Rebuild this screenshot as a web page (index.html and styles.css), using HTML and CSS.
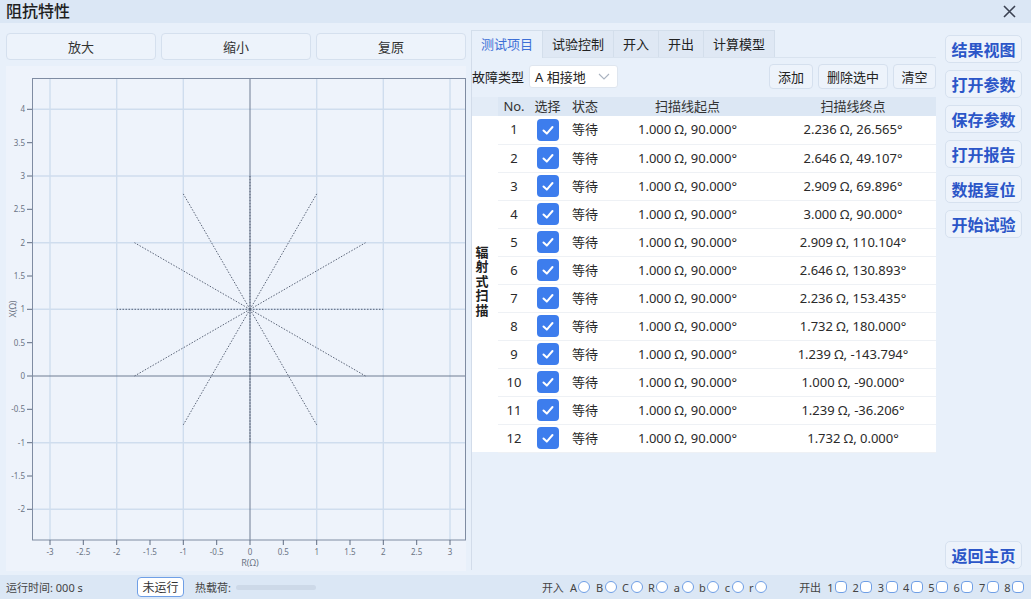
FILE: index.html
```html
<!DOCTYPE html>
<html lang="zh">
<head>
<meta charset="utf-8">
<title>阻抗特性</title>
<link rel="stylesheet" href="styles.css">
</head>
<body>
<div class="app">
  <header class="titlebar">
    <span class="title">阻抗特性</span>
    <svg class="close" viewBox="0 0 13 13" width="13" height="13"><path d="M1 1 L12 12 M12 1 L1 12"/></svg>
  </header>

  <main class="main">
    <section class="left">
      <div class="zoom-btns">
        <button class="btn">放大</button>
        <button class="btn">缩小</button>
        <button class="btn">复原</button>
      </div>
      <div class="chart">
        <svg class="plot" width="460" height="505" viewBox="0 0 460 505">
          <g class="gridlines">
            <line x1="44" y1="12" x2="44" y2="474"/>
            <line x1="110.7" y1="12" x2="110.7" y2="474"/>
            <line x1="177.3" y1="12" x2="177.3" y2="474"/>
            <line x1="310.7" y1="12" x2="310.7" y2="474"/>
            <line x1="377.3" y1="12" x2="377.3" y2="474"/>
            <line x1="444" y1="12" x2="444" y2="474"/>
            <line x1="26" y1="43.3" x2="460" y2="43.3"/>
            <line x1="26" y1="110" x2="460" y2="110"/>
            <line x1="26" y1="176.7" x2="460" y2="176.7"/>
            <line x1="26" y1="243.3" x2="460" y2="243.3"/>
            <line x1="26" y1="376.7" x2="460" y2="376.7"/>
            <line x1="26" y1="443.3" x2="460" y2="443.3"/>
          </g>
          <g class="zero">
            <line x1="244" y1="12" x2="244" y2="474"/>
            <line x1="26" y1="310" x2="460" y2="310"/>
          </g>
          <g class="rays">
            <line x1="244" y1="243.3" x2="377.3" y2="243.3"/>
            <line x1="244" y1="243.3" x2="359.5" y2="176.7"/>
            <line x1="244" y1="243.3" x2="310.7" y2="127.9"/>
            <line x1="244" y1="243.3" x2="244" y2="110"/>
            <line x1="244" y1="243.3" x2="177.3" y2="127.9"/>
            <line x1="244" y1="243.3" x2="128.5" y2="176.7"/>
            <line x1="244" y1="243.3" x2="110.7" y2="243.3"/>
            <line x1="244" y1="243.3" x2="128.5" y2="310"/>
            <line x1="244" y1="243.3" x2="177.3" y2="358.8"/>
            <line x1="244" y1="243.3" x2="244" y2="376.7"/>
            <line x1="244" y1="243.3" x2="310.7" y2="358.8"/>
            <line x1="244" y1="243.3" x2="359.5" y2="310"/>
          </g>
          <rect class="frame" x="26.5" y="12.5" width="433" height="461.5"/>
          <g class="ticks">
            <line x1="21" y1="43.3" x2="26" y2="43.3"/>
            <line x1="21" y1="76.7" x2="26" y2="76.7"/>
            <line x1="21" y1="110" x2="26" y2="110"/>
            <line x1="21" y1="143.3" x2="26" y2="143.3"/>
            <line x1="21" y1="176.7" x2="26" y2="176.7"/>
            <line x1="21" y1="210" x2="26" y2="210"/>
            <line x1="21" y1="243.3" x2="26" y2="243.3"/>
            <line x1="21" y1="276.7" x2="26" y2="276.7"/>
            <line x1="21" y1="310" x2="26" y2="310"/>
            <line x1="21" y1="343.3" x2="26" y2="343.3"/>
            <line x1="21" y1="376.7" x2="26" y2="376.7"/>
            <line x1="21" y1="410" x2="26" y2="410"/>
            <line x1="21" y1="443.3" x2="26" y2="443.3"/>
            <line x1="44" y1="474" x2="44" y2="479"/>
            <line x1="77.3" y1="474" x2="77.3" y2="479"/>
            <line x1="110.7" y1="474" x2="110.7" y2="479"/>
            <line x1="144" y1="474" x2="144" y2="479"/>
            <line x1="177.3" y1="474" x2="177.3" y2="479"/>
            <line x1="210.7" y1="474" x2="210.7" y2="479"/>
            <line x1="244" y1="474" x2="244" y2="479"/>
            <line x1="277.3" y1="474" x2="277.3" y2="479"/>
            <line x1="310.7" y1="474" x2="310.7" y2="479"/>
            <line x1="344" y1="474" x2="344" y2="479"/>
            <line x1="377.3" y1="474" x2="377.3" y2="479"/>
            <line x1="410.7" y1="474" x2="410.7" y2="479"/>
            <line x1="444" y1="474" x2="444" y2="479"/>
          </g>
          <g class="ylabels">
            <text x="19" y="46">4</text>
            <text x="19" y="79.5">3.5</text>
            <text x="19" y="113">3</text>
            <text x="19" y="146">2.5</text>
            <text x="19" y="179.5">2</text>
            <text x="19" y="213">1.5</text>
            <text x="19" y="246">1</text>
            <text x="19" y="279.5">0.5</text>
            <text x="19" y="313">0</text>
            <text x="19" y="346">-0.5</text>
            <text x="19" y="379.5">-1</text>
            <text x="19" y="413">-1.5</text>
            <text x="19" y="446">-2</text>
          </g>
          <g class="xlabels">
            <text x="44" y="489">-3</text>
            <text x="77.3" y="489">-2.5</text>
            <text x="110.7" y="489">-2</text>
            <text x="144" y="489">-1.5</text>
            <text x="177.3" y="489">-1</text>
            <text x="210.7" y="489">-0.5</text>
            <text x="244" y="489">0</text>
            <text x="277.3" y="489">0.5</text>
            <text x="310.7" y="489">1</text>
            <text x="344" y="489">1.5</text>
            <text x="377.3" y="489">2</text>
            <text x="410.7" y="489">2.5</text>
            <text x="444" y="489">3</text>
          </g>
          <text class="axis-title" x="244" y="500">R(Ω)</text>
          <text class="axis-title" transform="translate(10 243) rotate(-90)" x="0" y="0">X(Ω)</text>
        </svg>
      </div>
    </section>

    <section class="center">
      <nav class="tabs">
        <span class="tab active">测试项目</span>
        <span class="tab">试验控制</span>
        <span class="tab">开入</span>
        <span class="tab">开出</span>
        <span class="tab">计算模型</span>
      </nav>
      <div class="tab-body">
        <div class="toolbar">
          <span class="label">故障类型</span>
          <div class="select">
            <span>A 相接地</span>
            <svg class="chev" viewBox="0 0 12 7" width="12" height="7"><polyline points="1,1 6,6 11,1"/></svg>
          </div>
          <div class="tool-btns">
            <button class="tbtn w44">添加</button>
            <button class="tbtn w70">删除选中</button>
            <button class="tbtn w43">清空</button>
          </div>
        </div>
        <table class="grid">
          <colgroup>
            <col class="c-group"><col class="c-no"><col class="c-sel"><col class="c-st"><col class="c-a"><col class="c-b">
          </colgroup>
          <thead>
            <tr><th class="th-group"></th><th>No.</th><th>选择</th><th>状态</th><th>扫描线起点</th><th>扫描线终点</th></tr>
          </thead>
          <tbody>
            <tr><td class="group" rowspan="12"><span class="vtext">辐射式扫描</span></td><td>1</td><td><span class="cb"><svg viewBox="0 0 22 22"><path d="M6.5 11.5 L9.8 14.6 L15.5 8"/></svg></span></td><td>等待</td><td>1.000 Ω, 90.000°</td><td>2.236 Ω, 26.565°</td></tr>
            <tr><td>2</td><td><span class="cb"><svg viewBox="0 0 22 22"><path d="M6.5 11.5 L9.8 14.6 L15.5 8"/></svg></span></td><td>等待</td><td>1.000 Ω, 90.000°</td><td>2.646 Ω, 49.107°</td></tr>
            <tr><td>3</td><td><span class="cb"><svg viewBox="0 0 22 22"><path d="M6.5 11.5 L9.8 14.6 L15.5 8"/></svg></span></td><td>等待</td><td>1.000 Ω, 90.000°</td><td>2.909 Ω, 69.896°</td></tr>
            <tr><td>4</td><td><span class="cb"><svg viewBox="0 0 22 22"><path d="M6.5 11.5 L9.8 14.6 L15.5 8"/></svg></span></td><td>等待</td><td>1.000 Ω, 90.000°</td><td>3.000 Ω, 90.000°</td></tr>
            <tr><td>5</td><td><span class="cb"><svg viewBox="0 0 22 22"><path d="M6.5 11.5 L9.8 14.6 L15.5 8"/></svg></span></td><td>等待</td><td>1.000 Ω, 90.000°</td><td>2.909 Ω, 110.104°</td></tr>
            <tr><td>6</td><td><span class="cb"><svg viewBox="0 0 22 22"><path d="M6.5 11.5 L9.8 14.6 L15.5 8"/></svg></span></td><td>等待</td><td>1.000 Ω, 90.000°</td><td>2.646 Ω, 130.893°</td></tr>
            <tr><td>7</td><td><span class="cb"><svg viewBox="0 0 22 22"><path d="M6.5 11.5 L9.8 14.6 L15.5 8"/></svg></span></td><td>等待</td><td>1.000 Ω, 90.000°</td><td>2.236 Ω, 153.435°</td></tr>
            <tr><td>8</td><td><span class="cb"><svg viewBox="0 0 22 22"><path d="M6.5 11.5 L9.8 14.6 L15.5 8"/></svg></span></td><td>等待</td><td>1.000 Ω, 90.000°</td><td>1.732 Ω, 180.000°</td></tr>
            <tr><td>9</td><td><span class="cb"><svg viewBox="0 0 22 22"><path d="M6.5 11.5 L9.8 14.6 L15.5 8"/></svg></span></td><td>等待</td><td>1.000 Ω, 90.000°</td><td>1.239 Ω, -143.794°</td></tr>
            <tr><td>10</td><td><span class="cb"><svg viewBox="0 0 22 22"><path d="M6.5 11.5 L9.8 14.6 L15.5 8"/></svg></span></td><td>等待</td><td>1.000 Ω, 90.000°</td><td>1.000 Ω, -90.000°</td></tr>
            <tr><td>11</td><td><span class="cb"><svg viewBox="0 0 22 22"><path d="M6.5 11.5 L9.8 14.6 L15.5 8"/></svg></span></td><td>等待</td><td>1.000 Ω, 90.000°</td><td>1.239 Ω, -36.206°</td></tr>
            <tr><td>12</td><td><span class="cb"><svg viewBox="0 0 22 22"><path d="M6.5 11.5 L9.8 14.6 L15.5 8"/></svg></span></td><td>等待</td><td>1.000 Ω, 90.000°</td><td>1.732 Ω, 0.000°</td></tr>
          </tbody>
        </table>
      </div>
    </section>

    <aside class="side">
      <button class="sbtn">结果视图</button>
      <button class="sbtn">打开参数</button>
      <button class="sbtn">保存参数</button>
      <button class="sbtn">打开报告</button>
      <button class="sbtn">数据复位</button>
      <button class="sbtn">开始试验</button>
      <button class="sbtn home">返回主页</button>
    </aside>
  </main>

  <footer class="status">
    <span class="runtime">运行时间: 000 s</span>
    <span class="state">未运行</span>
    <span class="heat">热载荷:</span>
    <span class="heatbar"></span>
    <div class="io io-in">
      <span class="io-title">开入</span>
      <span class="io-item">A<i class="led"></i></span>
      <span class="io-item">B<i class="led"></i></span>
      <span class="io-item">C<i class="led"></i></span>
      <span class="io-item">R<i class="led"></i></span>
      <span class="io-item">a<i class="led"></i></span>
      <span class="io-item">b<i class="led"></i></span>
      <span class="io-item">c<i class="led"></i></span>
      <span class="io-item">r<i class="led"></i></span>
    </div>
    <div class="io io-out">
      <span class="io-title">开出</span>
      <span class="io-item">1<i class="led sq"></i></span>
      <span class="io-item">2<i class="led sq"></i></span>
      <span class="io-item">3<i class="led sq"></i></span>
      <span class="io-item">4<i class="led sq"></i></span>
      <span class="io-item">5<i class="led sq"></i></span>
      <span class="io-item">6<i class="led sq"></i></span>
      <span class="io-item">7<i class="led sq"></i></span>
      <span class="io-item">8<i class="led sq"></i></span>
    </div>
  </footer>
</div>
</body>
</html>
```

FILE: styles.css
```css
* { box-sizing: border-box; margin: 0; padding: 0; }
html, body { width: 1031px; height: 599px; overflow: hidden; }
body {
  font-family: "Noto Sans", "Noto Sans CJK SC", sans-serif;
  color: #333;
  background: #e8f0fa;
}
button { font-family: inherit; cursor: pointer; }

.app { display: flex; flex-direction: column; height: 599px; }

/* title bar */
.titlebar {
  height: 23px;
  background: #dbe7f5;
  display: flex;
  align-items: center;
  justify-content: space-between;
  padding: 0 15px 0 6px;
}
.title { font-size: 16px; font-weight: 500; color: #1f1f1f; line-height: 23px; }
.close path { stroke: #3b4252; stroke-width: 1.6; fill: none; }

/* main */
.main {
  height: 552px;
  display: flex;
  padding: 0 9px 0 6px;
  background: #e8f0fa;
}

.left { width: 460px; padding-top: 10px; display: flex; flex-direction: column; }
.zoom-btns { display: flex; gap: 5px; height: 27px; }
.btn {
  flex: 1;
  background: #edf3fb;
  border: 1px solid #d5e0ee;
  border-radius: 4px;
  font-size: 13px;
  color: #333;
}
.chart { margin-top: 6px; height: 505px; background: #eef3fb; }
.plot { display: block; }
.gridlines line { stroke: #cfddee; stroke-width: 1.4; }
.zero line { stroke: #6f7d93; stroke-width: 1; }
.rays line { stroke: #596377; stroke-width: 1; stroke-dasharray: 1.5 1.5; }
.frame { fill: none; stroke: #7f8ca2; stroke-width: 1; }
.ticks line { stroke: #5f6c82; stroke-width: 1; }
.ylabels text { font-size: 8px; fill: #6b7384; text-anchor: end; }
.xlabels text { font-size: 8px; fill: #6b7384; text-anchor: middle; }
.axis-title { font-size: 9px; fill: #6b7384; text-anchor: middle; }

/* center */
.center {
  width: 465px;
  margin-left: 5px;
  padding-top: 7px;
  display: flex;
  flex-direction: column;
}
.tabs { display: flex; height: 28px; border-bottom: 1px solid #d9e3ef; }
.tab {
  padding: 0 9px;
  font-size: 13px;
  line-height: 27px;
  background: #dfe8f4;
  border: 1px solid #d3deeb;
  border-bottom: none;
  margin-right: -1px;
  color: #222;
}
.tab.active {
  background: #e8f0fa;
  color: #3d6fd6;
  height: 28px;
}
.tab-body {
  flex: 1;
  border-left: 1px solid #d2dcea;
  padding-top: 6px;
  margin-bottom: 5px;
}
.toolbar { display: flex; align-items: center; height: 25px; }
.label { font-size: 13px; color: #222; }
.select {
  margin-left: 5px;
  width: 89px;
  height: 23px;
  background: #fff;
  border: 1px solid #dfe6ef;
  border-radius: 3px;
  display: flex;
  align-items: center;
  justify-content: space-between;
  padding: 0 7px 0 5px;
  font-size: 13px;
  color: #222;
}
.chev polyline { fill: none; stroke: #aab3c0; stroke-width: 1.1; }
.tool-btns { margin-left: auto; display: flex; gap: 5px; }
.tbtn {
  height: 25px;
  background: #edf3fb;
  border: 1px solid #d5e0ee;
  border-radius: 4px;
  font-size: 13px;
  color: #222;
}
.w44 { width: 44px; }
.w70 { width: 70px; }
.w43 { width: 43px; }

.grid {
  margin-top: 8px;
  width: 464px;
  table-layout: fixed;
  border-collapse: collapse;
  font-size: 13px;
  color: #2a2a2a;
}
.c-group { width: 26px; }
.c-no { width: 32px; }
.c-sel { width: 35px; }
.c-st { width: 40px; }
.c-a { width: 165px; }
.c-b { width: 166px; }
.grid th {
  height: 19px;
  font-weight: 400;
  background: #dce7f4;
  padding: 0;
  line-height: 19px;
  color: #333;
}
.grid th.th-group { background: #e3ecf7; }
.grid td {
  height: 28px;
  padding: 0;
  text-align: center;
  background: #fff;
  border-bottom: 1px solid #eef1f5;
  line-height: 27px;
}
.grid td.group {
  border-bottom: none;
  vertical-align: middle;
  font-weight: 700;
  color: #222;
  padding-right: 6px;
}
.vtext { display: inline-block; width: 14px; line-height: 14.5px; word-break: break-all; font-size: 13px; }
.cb {
  display: inline-block;
  width: 22px;
  height: 22px;
  border-radius: 4px;
  background: #3d7ded;
  vertical-align: middle;
  margin-top: -2px;
}
.cb svg { display: block; width: 22px; height: 22px; }
.cb path { fill: none; stroke: #fff; stroke-width: 2; stroke-linecap: round; stroke-linejoin: round; }

/* side */
.side {
  width: 77px;
  margin-left: 9px;
  padding: 12px 0 6px;
  display: flex;
  flex-direction: column;
  gap: 7px;
}
.sbtn {
  height: 28px;
  background: #edf3fb;
  border: 1px solid #d6e1ef;
  border-radius: 5px;
  font-size: 16px;
  font-weight: 700;
  color: #2b56c8;
  padding: 0;
}
.sbtn.home { margin-top: auto; }

/* status */
.status {
  height: 24px;
  background: #dbe7f5;
  display: flex;
  align-items: center;
  padding: 0 7px 0 6px;
  font-size: 11px;
  color: #444;
}
.runtime { width: 131px; }
.state {
  width: 47px;
  height: 20px;
  border: 1px solid #6f9fe6;
  border-radius: 4px;
  background: #fff;
  font-size: 12px;
  color: #333;
  display: flex;
  align-items: center;
  justify-content: center;
}
.heat { margin-left: 11px; }
.heatbar {
  margin-left: 5px;
  width: 80px;
  height: 5px;
  border-radius: 3px;
  background: #cdd9e8;
}
.io { display: flex; align-items: center; }
.io-in { margin-left: auto; }
.io-out { margin-left: 32px; }
.io-title { margin-right: 6px; }
.io-item { display: flex; align-items: center; margin-right: 5.5px; }
.io-item:last-child { margin-right: 0; }
.led {
  display: inline-block;
  width: 12px;
  height: 12px;
  margin-left: 1.5px;
  border: 1px solid #6f9fe6;
  border-radius: 50%;
  background: #fff;
}
.led.sq { width: 12px; border-radius: 4px; }
```
